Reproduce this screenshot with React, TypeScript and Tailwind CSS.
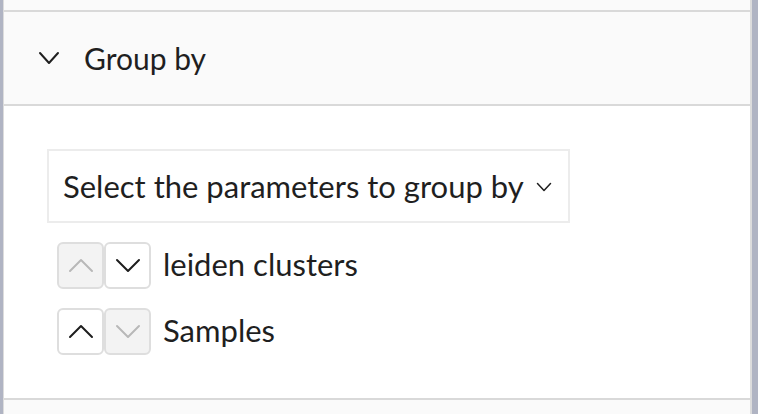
import React from 'react';

function Chevron({
  dir,
  w,
  h,
  stroke = 2,
  className,
}: {
  dir: 'up' | 'down';
  w: number;
  h: number;
  stroke?: number;
  className?: string;
}) {
  const p = stroke;
  const d =
    dir === 'down'
      ? `M${p} ${p}L${w / 2} ${h - p}L${w - p} ${p}`
      : `M${p} ${h - p}L${w / 2} ${p}L${w - p} ${h - p}`;
  return (
    <svg width={w} height={h} viewBox={`0 0 ${w} ${h}`} className={className} fill="none" stroke="currentColor" strokeWidth={stroke} strokeLinecap="round" strokeLinejoin="round">
      <path d={d} />
    </svg>
  );
}

function MoveButton({ dir, disabled }: { dir: 'up' | 'down'; disabled?: boolean }) {
  return (
    <button
      disabled={disabled}
      className={`w-[47px] h-[47px] flex items-center justify-center rounded-[6px] border-2 border-[#dedede] ${
        disabled ? 'bg-[#f3f3f3] text-[#b8b8b8]' : 'bg-white text-[#1e1e1e]'
      }`}
    >
      <Chevron dir={dir} w={26} h={15} stroke={2} />
    </button>
  );
}

const groups = [
  { name: 'leiden clusters', first: true, last: false },
  { name: 'Samples', first: false, last: true },
];

export default function App() {
  return (
    <div
      className="w-[758px] h-[414px] bg-[#fafafa] flex overflow-hidden text-[#1f1f1f]"
      style={{ fontFamily: 'Lato, "Noto Sans", sans-serif' }}
    >
      <div className="w-[3px] bg-[#b0b4c3] shrink-0" />
      <div className="flex-1 flex flex-col border-l border-[#dcdcdc] border-r-2">
        <div className="h-[10px] shrink-0" />
        <div className="h-[96px] shrink-0 border-y-2 border-[#d9d9d9] flex items-center pl-[34px]">
          <Chevron dir="down" w={22} h={14} stroke={2} />
          <span className="ml-[24px] text-[30px] leading-none">Group by</span>
        </div>
        <div className="h-[292px] shrink-0 bg-white pt-[43px] pl-[43px]">
          <div className="w-[523px] h-[74px] border-2 border-[#ececec] flex items-center pl-[14px] text-[31px] leading-none">
            <span>Select the parameters to group by</span>
            <Chevron dir="down" w={16} h={10} stroke={1.5} className="ml-[12px] mt-[2px]" />
          </div>
          <div className="mt-[19px] pl-[10px] flex flex-col gap-[19px]">
            {groups.map((g) => (
              <div key={g.name} className="flex items-center">
                <MoveButton dir="up" disabled={g.first} />
                <MoveButton dir="down" disabled={g.last} />
                <span className="ml-[12px] text-[31px] leading-none -mt-[2px]">{g.name}</span>
              </div>
            ))}
          </div>
        </div>
        <div className="flex-1 border-t-2 border-[#d9d9d9]" />
      </div>
      <div className="w-[6px] bg-[#b0b4c3] shrink-0" />
    </div>
  );
}
